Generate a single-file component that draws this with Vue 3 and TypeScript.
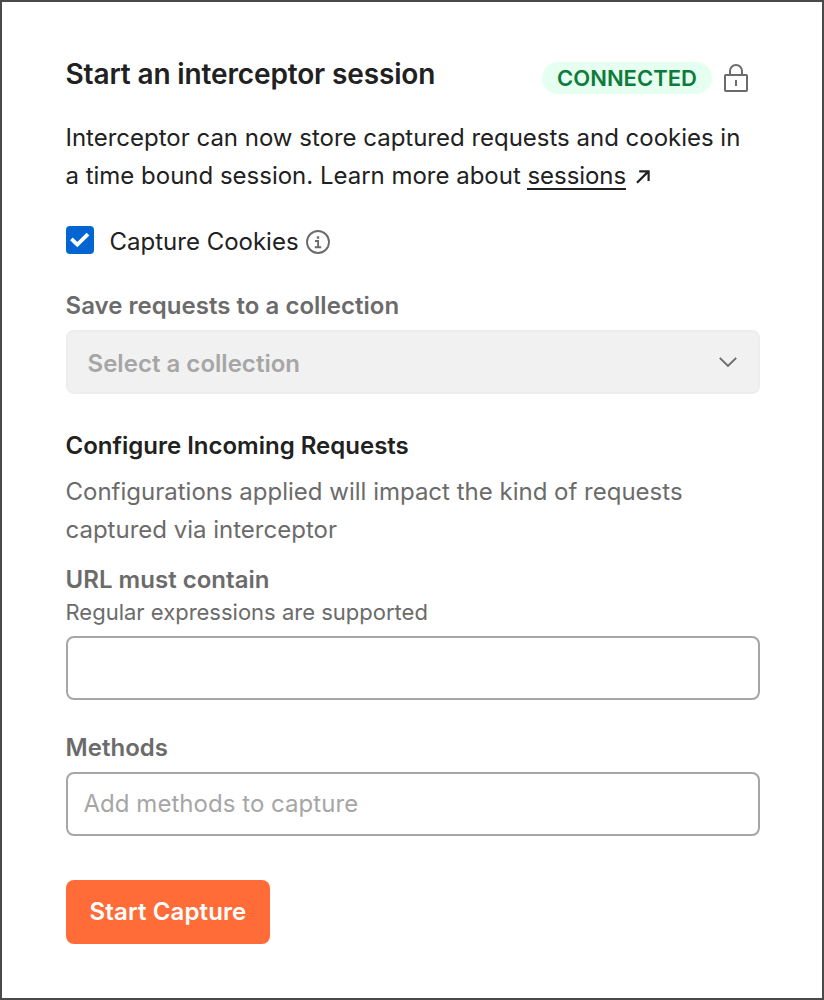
<script setup lang="ts">
import { ref } from 'vue'

const captureCookies = ref(true)
const urlPattern = ref('')
const methods = ref('')
</script>

<template>
  <main class="panel">
    <header class="head">
      <h1 class="title">Start an interceptor session</h1>
      <div class="status">
        <span class="badge">CONNECTED</span>
        <svg class="lock" width="26" height="30" viewBox="0 0 26 30" fill="none" stroke="#6b6b6b" stroke-width="2">
          <rect x="2" y="12" width="22" height="16" rx="0.8" />
          <path d="M7 12V8a6 6 0 0 1 12 0v4M13 17v6" />
        </svg>
      </div>
    </header>

    <p class="intro">
      Interceptor can now store captured requests and cookies in<br />
      a time bound session. Learn more about <a class="link">sessions</a>
      <svg class="arrow" width="14" height="14" viewBox="0 0 14 14" fill="none" stroke="#212121" stroke-width="2.2">
        <path d="M1 12.8 12.4 1.4M3.2 1.3h9.4V11" />
      </svg>
    </p>

    <label class="check-row">
      <input v-model="captureCookies" class="native" type="checkbox" />
      <span class="box">
        <svg v-if="captureCookies" width="28" height="28" viewBox="0 0 28 28" fill="none" stroke="#fff" stroke-width="3.8">
          <path d="M5.4 12.9 11.3 18.6 22 8.2" />
        </svg>
      </span>
      <span class="check-text">Capture Cookies</span>
      <svg class="info" width="24" height="24" viewBox="0 0 24 24" fill="none" stroke="#6b6b6b" stroke-width="1.9">
        <circle cx="12" cy="12" r="11" />
        <path d="M9 11h3.1v6.2M8.8 17.2h6.4" />
        <path d="M10.8 7.5h2.4" stroke-width="2.4" />
      </svg>
    </label>

    <div class="label save">Save requests to a collection</div>
    <div class="select">
      <span class="select-text">Select a collection</span>
      <svg class="chevron" width="20" height="12" viewBox="0 0 20 12" fill="none" stroke="#6b6b6b" stroke-width="2">
        <path d="M1.8 1.9 10 9.9 18.2 1.9" />
      </svg>
    </div>

    <h2 class="subtitle">Configure Incoming Requests</h2>
    <p class="desc">
      Configurations applied will impact the kind of requests<br />captured via interceptor
    </p>

    <div class="label url">URL must contain</div>
    <div class="hint">Regular expressions are supported</div>
    <input v-model="urlPattern" class="field" type="text" />

    <div class="label methods">Methods</div>
    <input v-model="methods" class="field" type="text" placeholder="Add methods to capture" />

    <button class="start" type="button">Start Capture</button>
  </main>
</template>

<style>
body {
  background: #fff;
}
</style>

<style scoped>
.panel {
  box-sizing: border-box;
  width: 824px;
  height: 1000px;
  padding: 52px 62px 0 64px;
  border: 2px solid #4a4a4a;
  background: #fff;
  color: #212121;
  font-family: Inter, 'Liberation Sans', sans-serif;
  font-size: 24px;
  line-height: 38px;
}
.head {
  display: flex;
  justify-content: space-between;
  height: 65px;
}
.title {
  margin: 0 0 0 -0.5px;
  font-size: 28px;
  font-weight: 600;
  line-height: 41px;
  letter-spacing: -0.14px;
}
.status {
  display: flex;
  align-items: flex-start;
  gap: 11px;
  padding: 8px 11px 0 0;
}
.badge {
  box-sizing: border-box;
  width: 170px;
  height: 32px;
  border-radius: 16px;
  background: #e5fff1;
  color: #0f7b3a;
  font-weight: 600;
  font-size: 22px;
  line-height: 32px;
  text-align: center;
}
.lock {
  display: block;
  margin-top: 1px;
}
.intro {
  margin: 0 0 0 -0.5px;
  letter-spacing: -0.01px;
  white-space: nowrap;
}
.link {
  display: inline-block;
  height: 31px;
  border-bottom: 2px solid #212121;
  line-height: 38px;
  letter-spacing: -0.06px;
  vertical-align: top;
}
.arrow {
  margin-left: 10px;
}
.check-row {
  display: flex;
  align-items: center;
  height: 28px;
  margin-top: 31px;
}
.native {
  position: absolute;
  opacity: 0;
  pointer-events: none;
}
.box {
  display: block;
  width: 28px;
  height: 28px;
  border-radius: 4px;
  background: #0265d2;
}
.box svg {
  display: block;
}
.check-text {
  margin: 3px 7.5px 0 15.5px;
}
.info {
  margin-top: 4px;
}
.label {
  margin-left: -0.5px;
  color: #6b6b6b;
  font-weight: 600;
  letter-spacing: 0.03px;
}
.save {
  margin-top: 33px;
}
.select {
  box-sizing: border-box;
  display: flex;
  align-items: center;
  justify-content: space-between;
  height: 64px;
  margin-top: 5px;
  padding: 0 20px 0 19.5px;
  border: 2px solid #ededed;
  border-radius: 8px;
  background: #f1f1f1;
  color: #a6a6a6;
  font-weight: 600;
  letter-spacing: 0.03px;
}
.select-text {
  padding-top: 4px;
}
.subtitle {
  margin: 33px 0 0 -0.5px;
  font-size: 24px;
  font-weight: 600;
}
.desc {
  margin: 8px 0 0 -0.5px;
  color: #6b6b6b;
}
.url {
  margin-top: 12px;
}
.hint {
  margin: -1px 0 0 -0.5px;
  color: #6b6b6b;
  font-size: 22px;
  line-height: 28px;
}
.field {
  box-sizing: border-box;
  display: block;
  width: 694px;
  height: 64px;
  margin: 10px 0 0;
  padding: 0 16px 2px 15.5px;
  border: 2px solid #a6a6a6;
  border-radius: 8px;
  outline: none;
  background: #fff;
  color: #212121;
  font: inherit;
}
.field::placeholder {
  color: #a6a6a6;
  letter-spacing: 0.04px;
  opacity: 1;
}
.methods {
  margin-top: 29px;
}
.methods + .field {
  margin-top: 5px;
}
.start {
  display: block;
  width: 204px;
  height: 64px;
  margin-top: 44px;
  padding: 0;
  border: 0;
  border-radius: 8px;
  background: #ff6c37;
  color: #fff;
  font: inherit;
  font-weight: 600;
  letter-spacing: 0.12px;
}
</style>
